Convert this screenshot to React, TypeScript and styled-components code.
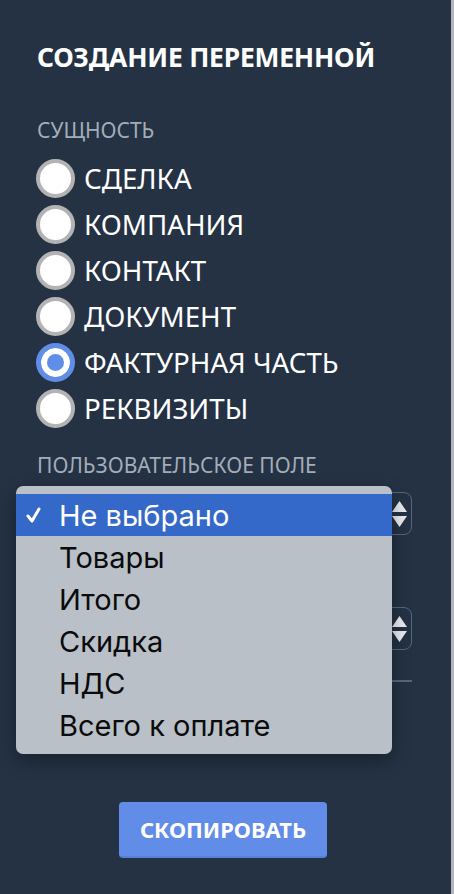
import React, { useState } from 'react'
import styled, { createGlobalStyle } from 'styled-components'

const GlobalStyle = createGlobalStyle`
    html, body {
        margin: 0;
        padding: 0;
        background: #243244;
    }
    * {
        box-sizing: border-box;
    }
`

const Panel = styled.div`
    width: 454px;
    height: 894px;
    background-color: #243244;
    border-right: 3px solid #b3b5b8;
    padding: 39px 39px 0 17px;
    font-family: 'Noto Sans', 'Open Sans', sans-serif;
    color: #ffffff;
    display: flex;
    flex-direction: column;
`

const Title = styled.h1`
    margin: 0 0 0 20px;
    font-size: 26.4px;
    line-height: 36px;
    font-weight: bold;
    letter-spacing: -0.2px;
    white-space: nowrap;
`

const SectionLabel = styled.div<{ top: number }>`
    margin: ${({ top }) => top}px 0 0 20px;
    font-size: 21px;
    line-height: 24px;
    color: #a3adb9;
    text-transform: uppercase;
    white-space: nowrap;
`

const RadioList = styled.div`
    display: flex;
    flex-direction: column;
    margin: 13px 0 0 19px;
`

const RadioRow = styled.label`
    display: flex;
    align-items: center;
    gap: 9px;
    height: 46px;
    font-size: 27.7px;
    white-space: nowrap;
    cursor: pointer;
`

const RadioCircle = styled.span<{ checked: boolean }>`
    width: 39px;
    height: 39px;
    border-radius: 50%;
    flex-shrink: 0;
    background: ${({ checked }) => (checked ? '#5f8de8' : '#ffffff')};
    border: ${({ checked }) =>
        checked ? '5px solid #5f8de8' : '4px solid #b3b3b3'};
    box-shadow: ${({ checked }) =>
        checked ? 'inset 0 0 0 6px #ffffff' : 'none'};
`

const SelectWrap = styled.div<{ top: number }>`
    position: relative;
    margin-top: ${({ top }) => top}px;
`

const SelectBox = styled.div`
    height: 43px;
    border: 1.5px solid #56667c;
    border-radius: 8px;
    display: flex;
    align-items: center;
    justify-content: flex-end;
    padding-right: 3px;
`

const Arrows = styled.svg`
    width: 17px;
    height: 32px;
`

const Divider = styled.div`
    height: 2px;
    background: #56667c;
    margin-top: 30px;
`

const Menu = styled.ul`
    position: absolute;
    top: -6px;
    left: -1px;
    width: 376px;
    margin: 0;
    padding: 8px 0 8px;
    list-style: none;
    background: #b9c0c8;
    border-radius: 7px;
    box-shadow: 0 6px 18px rgba(0, 0, 0, 0.35);
    font-family: Inter, 'Liberation Sans', sans-serif;
    z-index: 2;
`

const MenuItem = styled.li<{ active: boolean }>`
    height: 42px;
    display: flex;
    align-items: center;
    padding-left: 43px;
    position: relative;
    font-size: 29px;
    white-space: nowrap;
    color: ${({ active }) => (active ? '#ffffff' : '#0b0b0b')};
    background: ${({ active }) => (active ? '#3569c9' : 'transparent')};
`

const Check = styled.svg`
    position: absolute;
    left: 10px;
    top: 13px;
    width: 15px;
    height: 16px;
`

const ButtonRow = styled.div`
    display: flex;
    justify-content: center;
    margin-top: 120px;
    padding-left: 17px;
`

const CopyButton = styled.button`
    width: 208px;
    height: 56px;
    border: none;
    border-bottom: 2px solid #5582d8;
    border-radius: 4px;
    background: #618de8;
    color: #ffffff;
    font-family: 'Noto Sans', 'Open Sans', sans-serif;
    font-size: 22px;
    font-weight: bold;
    padding: 0;
    cursor: pointer;
`

const entities = [
    'СДЕЛКА',
    'КОМПАНИЯ',
    'КОНТАКТ',
    'ДОКУМЕНТ',
    'ФАКТУРНАЯ ЧАСТЬ',
    'РЕКВИЗИТЫ',
]

const fields = ['Не выбрано', 'Товары', 'Итого', 'Скидка', 'НДС', 'Всего к оплате']

const SelectArrows = () => (
    <Arrows viewBox="0 0 17 32">
        <path d="M8.5 3 L16 14 L1 14 Z" fill="#e8ebef" />
        <path d="M8.5 29 L16 18 L1 18 Z" fill="#e8ebef" />
    </Arrows>
)

const App: React.FC = () => {
    const [entity, setEntity] = useState(4)
    const [field] = useState(0)

    return (
        <>
            <GlobalStyle />
            <Panel>
                <Title>СОЗДАНИЕ ПЕРЕМЕННОЙ</Title>
                <SectionLabel top={43}>Сущность</SectionLabel>
                <RadioList>
                    {entities.map((name, i) => (
                        <RadioRow key={name} onClick={() => setEntity(i)}>
                            <RadioCircle checked={entity === i} />
                            {name}
                        </RadioRow>
                    ))}
                </RadioList>
                <SectionLabel top={22}>Пользовательское поле</SectionLabel>
                <SelectWrap top={15}>
                    <SelectBox>
                        <SelectArrows />
                    </SelectBox>
                    <Menu>
                        {fields.map((name, i) => (
                            <MenuItem key={name} active={field === i}>
                                {field === i && (
                                    <Check viewBox="0 0 15 16">
                                        <path
                                            d="M2 9 L6 14 L13 2"
                                            fill="none"
                                            stroke="#ffffff"
                                            strokeWidth="3"
                                            strokeLinecap="round"
                                            strokeLinejoin="round"
                                        />
                                    </Check>
                                )}
                                {name}
                            </MenuItem>
                        ))}
                    </Menu>
                </SelectWrap>
                <SelectWrap top={72}>
                    <SelectBox>
                        <SelectArrows />
                    </SelectBox>
                </SelectWrap>
                <Divider />
                <ButtonRow>
                    <CopyButton>СКОПИРОВАТЬ</CopyButton>
                </ButtonRow>
            </Panel>
        </>
    )
}

export default App
